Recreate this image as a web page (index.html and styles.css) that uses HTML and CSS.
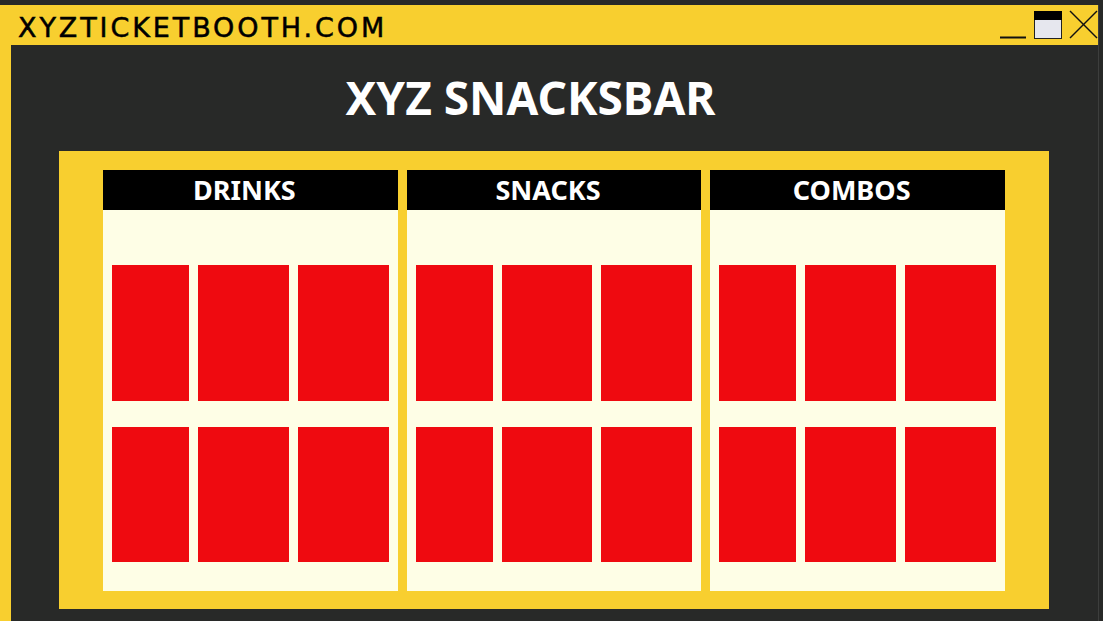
FILE: index.html
```html
<!DOCTYPE html>
<html lang="en">
<head>
    <meta charset="UTF-8">
    <meta name="viewport" content="width=device-width, initial-scale=1.0">
    <title>XYZ Snacksbar</title>
    <link rel="stylesheet" href="styles.css">
</head>
<body>
    <div class="window">
        <div class="title-bar">
            <span class="site-name">XYZTICKETBOOTH.COM</span>
            <svg class="window-controls" width="98" height="40" viewBox="0 0 98 40">
                <line x1="0" y1="32.5" x2="26" y2="32.5" stroke="#111" stroke-width="2"/>
                <rect x="34.5" y="6.5" width="27" height="27" fill="#e6e7ee" stroke="#222" stroke-width="1"/>
                <rect x="34" y="6" width="28" height="9" fill="#000"/>
                <line x1="70" y1="6" x2="97" y2="33" stroke="#111" stroke-width="1.5"/>
                <line x1="97" y1="6" x2="70" y2="33" stroke="#111" stroke-width="1.5"/>
            </svg>
        </div>

        <div class="window-content">
            <h1 class="bar-title">XYZ SNACKSBAR</h1>

            <div class="menu-board">
                <div class="menu-column">
                    <div class="menu-header">DRINKS</div>
                    <div class="menu-items">
                        <div class="item"></div><div class="item"></div><div class="item"></div>
                        <div class="item"></div><div class="item"></div><div class="item"></div>
                    </div>
                </div>
                <div class="menu-column">
                    <div class="menu-header">SNACKS</div>
                    <div class="menu-items">
                        <div class="item"></div><div class="item"></div><div class="item"></div>
                        <div class="item"></div><div class="item"></div><div class="item"></div>
                    </div>
                </div>
                <div class="menu-column">
                    <div class="menu-header">COMBOS</div>
                    <div class="menu-items">
                        <div class="item"></div><div class="item"></div><div class="item"></div>
                        <div class="item"></div><div class="item"></div><div class="item"></div>
                    </div>
                </div>
            </div>
        </div>
    </div>
</body>
</html>
```

FILE: styles.css
```css
body {
    margin: 0;
    background-color: #282928;
    font-family: 'Noto Sans', 'Open Sans', sans-serif;
    overflow: hidden;
}
.window {
    margin-top: 5px;
    width: 1087px;
    border-left: 11px solid #f8cf2f;
    border-right: 1px solid #3d3e3d;
    height: 640px;
}
.title-bar {
    display: flex;
    align-items: flex-start;
    height: 40px;
    background-color: #f8cf2f;
}
.site-name {
    font-family: 'DejaVu Sans', sans-serif;
    font-size: 27px;
    line-height: 34px;
    padding-top: 6px;
    padding-left: 7px;
    letter-spacing: 2.9px;
    color: #000;
    -webkit-text-stroke: 0.5px #000;
}
.window-controls {
    margin-left: auto;
    display: block;
}
.window-content {
    background-color: #282928;
    padding-top: 29px;
}
.bar-title {
    margin: 0 0 31px 0;
    padding-right: 48px;
    text-align: center;
    color: #fff;
    font-size: 46px;
    line-height: 46px;
    font-weight: bold;
}
.menu-board {
    display: grid;
    grid-template-columns: 1fr 1fr 1fr;
    column-gap: 9px;
    margin-left: 48px;
    width: 902px;
    padding: 19px 44px 18px;
    background-color: #f8cf2f;
}
.menu-column {
    background-color: #fefee6;
}
.menu-header {
    height: 40px;
    line-height: 40px;
    background-color: #000;
    color: #fff;
    text-align: center;
    padding-right: 12px;
    font-size: 27px;
    font-weight: bold;
}
.menu-items {
    display: grid;
    grid-template-columns: 77fr 91fr 91fr;
    grid-template-rows: 136px 135px;
    column-gap: 9px;
    row-gap: 26px;
    padding: 55px 9px 29px;
}
.item {
    background-color: #ef0a10;
}
```
